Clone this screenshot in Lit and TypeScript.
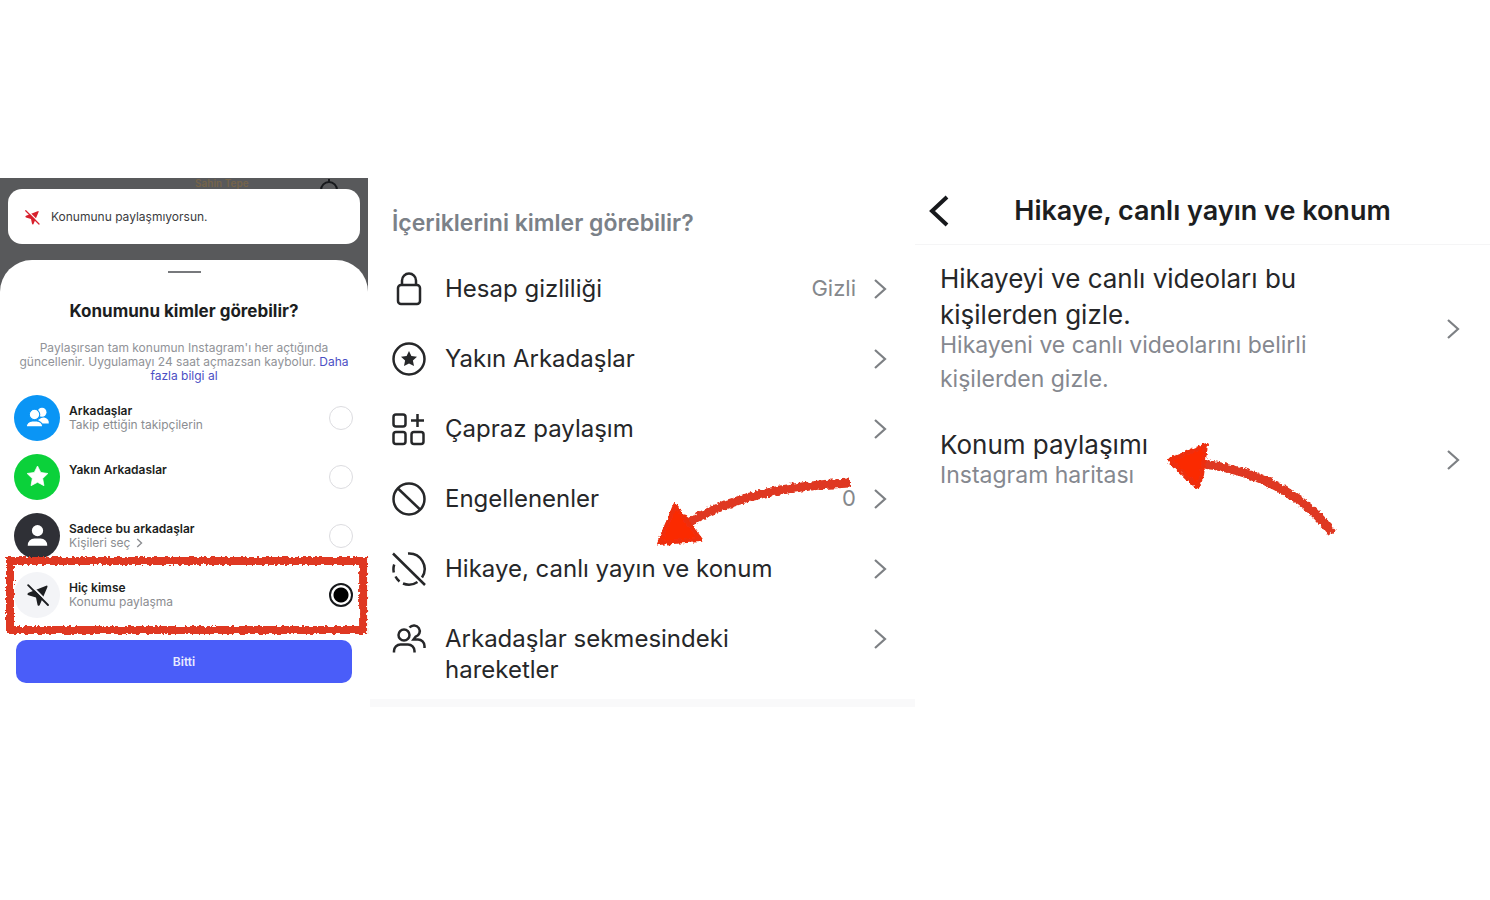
import { LitElement, html, css, svg } from "lit";
import { customElement, state } from "lit/decorators.js";

const chevron = html`<svg class="chev" viewBox="0 0 14 22" aria-hidden="true"><path d="M2 2 L12 11 L2 20" /></svg>`;

const icons: Record<string, unknown> = {
  lock: svg`<rect x="7" y="14" width="22" height="19" rx="3"/><path d="M11 14 V9.500 a7 7 0 0 1 14 0 V14"/>`,
  star: svg`<circle cx="18" cy="18" r="15.500"/><path class="solid" d="M18 10 l2.400 5 5.600 .7 -4.100 3.900 1.100 5.500 -5 -2.700 -5 2.700 1.100 -5.500 -4.100 -3.900 5.600 -.7z"/>`,
  grid: svg`<rect x="2.500" y="3.500" width="12" height="12" rx="2.500"/><rect x="2.500" y="21" width="12" height="12" rx="2.500"/><rect x="20.500" y="21" width="12" height="12" rx="2.500"/><path d="M26.500 3 V16 M20 9.500 H33"/>`,
  block: svg`<circle cx="18" cy="18" r="15.500"/><path d="M7 7.500 L29 28.500"/>`,
  hide: svg`<path d="M2 2.500 L34 34 M17 2.500 A15.500 15.500 0 0 1 31 26.500 M26.500 31 A15.500 15.500 0 0 1 12 32.500 M8.500 30.500 A15.500 15.500 0 0 1 4.500 25.500 M2.800 21.500 A15.500 15.500 0 0 1 3.200 13.500"/>`,
  people: svg`<circle cx="13" cy="14" r="5.500"/><path d="M3 31.500 V30 a6.500 6.500 0 0 1 6.500 -6.500 H17 a6.500 6.500 0 0 1 6.500 6.500 V31.500"/><path d="M18.500 6.500 A5.800 5.800 0 1 1 24.500 15.800 L22.500 18.500 H27 a6.500 6.500 0 0 1 6.500 6.500 V27"/>`,
};

const plane = svg`<path d="M30.500 6 Q32 6 31 8.500 L21 32 Q19 34.500 18 31.500 L16 22 L6 19 Q3 17.500 6 15.500 Z" fill="currentColor"/><path d="M8.500 5 L34 30.500" stroke="var(--cut)" stroke-width="2.500"/><path d="M5.500 5.500 L32 32" stroke="currentColor" stroke-width="2.500" stroke-linecap="round"/>`;

const audienceIcons: Record<string, unknown> = {
  friends: svg`<circle cx="24" cy="11" r="6" fill="#fff"/><path d="M18 26 a8 8 0 0 1 8 -8 h1 a7 7 0 0 1 6 8z" fill="#fff"/><circle cx="14" cy="14" r="7" fill="#fff" stroke="#0a95f5" stroke-width="1.500"/><path d="M3 30.500 a8 8 0 0 1 8 -8 h6 a8 8 0 0 1 8 8z" fill="#fff" stroke="#0a95f5" stroke-width="1.500"/>`,
  close: svg`<path d="M18 4 l4.300 8.600 9.500 1.400 -6.900 6.700 1.700 9.500 -8.600 -4.500 -8.600 4.500 1.700 -9.500 -6.900 -6.700 9.500 -1.400z" fill="#fff" stroke="#fff" stroke-width="1" stroke-linejoin="round"/>`,
  only: svg`<circle cx="18" cy="11.500" r="7.500" fill="#fff"/><path d="M5 31.500 a9 9 0 0 1 9 -9.500 h8 a9 9 0 0 1 9 9.500z" fill="#fff"/>`,
  nobody: plane,
};

const rough = (id: string) => svg`<filter id=${id} x="-5%" y="-15%" width="110%" height="130%"><feTurbulence type="fractalNoise" baseFrequency="0.300" numOctaves="2" seed="4"/><feDisplacementMap in="SourceGraphic" scale="5" xChannelSelector="R" yChannelSelector="G"/></filter>`;

@customElement("location-sheet")
class LocationSheet extends LitElement {
  @state() selected = "nobody";

  options = [
    { id: "friends", title: "Arkadaşlar", note: "Takip ettiğin takipçilerin" },
    { id: "close", title: "Yakın Arkadaslar", note: "" },
    { id: "only", title: "Sadece bu arkadaşlar", note: "Kişileri seç", more: true },
    { id: "nobody", title: "Hiç kimse", note: "Konumu paylaşma" },
  ];

  static styles = css`
    :host { display: block; background: #58595b; color: #1c1e21; }
    * { box-sizing: border-box; }
    .map { position: relative; padding: 11px 8px 0; }
    .place { position: absolute; left: 53%; top: -2px; font-size: 10px; line-height: 14px; font-weight: 600; color: #75644a; }
    .pin { position: absolute; right: 30px; top: 0; width: 18px; height: 14px; }
    .toast { position: relative; display: flex; align-items: center; gap: 10px; height: 55px; padding: 0 15px; border-radius: 14px; background: #fff; font-size: 12px; --cut: #fff; color: #3b3c3e; }
    .toast svg { width: 18px; height: 18px; color: #d8202c; }
    .sheet { margin-top: 16px; padding: 11px 16px 24px; border-radius: 32px 32px 0 0; background: #fff; }
    .handle { width: 33px; height: 2px; margin: 0 auto; background: #77797c; }
    h2 { margin: 27px 0 0; font-size: 17px; line-height: 22px; font-weight: 700; text-align: center; }
    .lead { margin: 19px 0 0; font-size: 12px; line-height: 14px; text-align: center; color: #919398; }
    a { color: #4b4fc4; text-decoration: none; }
    fieldset { margin: 5px 0 0; padding: 0; border: 0; }
    .option { position: relative; display: flex; align-items: center; height: 59px; gap: 9px; margin: 0 -1px 0 -2px; }
    .badge { flex: none; display: grid; place-items: center; width: 46px; height: 46px; border-radius: 50%; --cut: #f3f4f7; }
    .badge svg { width: 27px; height: 27px; }
    .friends { background: #0a95f5; }
    .close { background: #0bd13a; }
    .only { background: #2f3036; }
    .nobody { background: #f3f4f7; }
    .text { flex: 1; min-height: 28px; font-size: 12px; line-height: 14px; }
    .title { font-weight: 600; display: block; }
    .note { color: #8b8d91; }
    .note svg { width: 7px; height: 10px; margin-left: 6px; vertical-align: -1px; fill: none; stroke: #8b8d91; stroke-width: 3; }
    input { appearance: none; flex: none; width: 24px; height: 24px; margin: 0; border: 1px solid #dcdce0; border-radius: 50%; background: #fff; }
    input:checked { border: 2px solid #17191c; background: radial-gradient(circle, #000 7px, #fff 8px); }
    .mark { position: absolute; left: -9px; top: -9px; width: calc(100% + 25px); height: 79px; overflow: visible; pointer-events: none; }
    .mark rect { fill: none; stroke: #df3820; stroke-width: 8; }
    .done { display: block; width: 100%; height: 43px; margin-top: 16px; border: 0; border-radius: 10px; background: #4a5df9; color: #e8eaff; font: inherit; font-size: 12px; font-weight: 600; }
  `;

  render() {
    return html`
      <div class="map">
        <span class="place">Sahin Tepe</span>
        <svg class="pin" viewBox="0 0 18 14"><path d="M1 12 a8 8 0 0 1 16 0 M9 1 V5" fill="none" stroke="#17191c" stroke-width="2"/></svg>
        <div class="toast" role="status"><svg viewBox="0 0 36 36">${plane}</svg>Konumunu paylaşmıyorsun.</div>
      </div>
      <div class="sheet">
        <div class="handle"></div>
        <h2>Konumunu kimler görebilir?</h2>
        <p class="lead">Paylaşırsan tam konumun Instagram'ı her açtığında güncellenir. Uygulamayı 24 saat açmazsan kaybolur. <a href="#bilgi">Daha fazla bilgi al</a></p>
        <fieldset aria-label="Konumunu kimler görebilir?">
          ${this.options.map((o) => html`
            <label class="option">
              <span class="badge ${o.id}"><svg viewBox="0 0 36 36">${audienceIcons[o.id]}</svg></span>
              <span class="text"><span class="title">${o.title}</span><span class="note">${o.note}${o.more ? html`<svg viewBox="0 0 14 22"><path d="M2 2 L11.500 11 L2 20"/></svg>` : ""}</span></span>
              <input type="radio" name="audience" .checked=${this.selected === o.id} @change=${() => (this.selected = o.id)} />
              ${o.id === "nobody" ? html`<svg class="mark" aria-hidden="true">${rough("crayon-box")}<g filter="url(#crayon-box)"><rect x="5" y="5" width="97%" height="69"/></g></svg>` : ""}
            </label>`)}
        </fieldset>
        <button class="done">Bitti</button>
      </div>`;
  }
}

@customElement("privacy-list")
class PrivacyList extends LitElement {
  rows = [
    { icon: "lock", text: "Hesap gizliliği", value: "Gizli" },
    { icon: "star", text: "Yakın Arkadaşlar" },
    { icon: "grid", text: "Çapraz paylaşım" },
    { icon: "block", text: "Engellenenler", value: "0" },
    { icon: "hide", text: "Hikaye, canlı yayın ve konum" },
    { icon: "people", text: "Arkadaşlar sekmesindeki hareketler" },
  ];

  static styles = css`
    :host { display: block; position: relative; padding-left: 2px; color: #262729; }
    * { box-sizing: border-box; }
    h2 { margin: 0; padding: 30px 22px 16px; font-size: 23px; line-height: 30px; font-weight: 600; color: #7b8188; }
    ul { margin: 0; padding: 0 0 14px; list-style: none; border-bottom: 8px solid #f9f9fa; }
    .row { display: flex; align-items: flex-start; width: 100%; min-height: 70px; padding: 19px 28px 0 21px; border: 0; background: none; color: inherit; font: inherit; font-size: 24px; line-height: 31px; text-align: left; }
    .icon { flex: none; width: 36px; height: 36px; margin: -2px 18px 0 0; fill: none; stroke: currentColor; stroke-width: 2.5; }
    .solid { fill: currentColor; stroke: none; }
    .text { flex: 0 1 380px; margin-right: auto; }
    .value { color: #85888c; font-size: 22px; margin-right: 17px; }
    .chev { flex: none; width: 14px; height: 22px; margin-top: 5px; fill: none; stroke: #7d8084; stroke-width: 2.2; }
    .arrow { position: absolute; left: 52%; top: 296px; width: 210px; height: 80px; overflow: visible; pointer-events: none; }
  `;

  render() {
    return html`
      <h2>İçeriklerini kimler görebilir?</h2>
      <ul>
        ${this.rows.map((r) => html`<li><button class="row">
          <svg class="icon" viewBox="0 0 36 36" aria-hidden="true">${icons[r.icon]}</svg>
          <span class="text">${r.text}</span>
          ${r.value ? html`<span class="value">${r.value}</span>` : ""}
          ${chevron}
        </button></li>`)}
      </ul>
      <svg class="arrow" viewBox="0 0 210 80" aria-hidden="true">${rough("crayon-left")}
        <g filter="url(#crayon-left)"><path d="M36 49 C80 23 130 12 198 9" fill="none" stroke="#df3820" stroke-width="9"/><path d="M23 31 L49 66 L7 69 Z" fill="#fb2c06" stroke="#ee2f10" stroke-width="4" stroke-linejoin="round"/></g>
      </svg>`;
  }
}

@customElement("story-settings")
class StorySettings extends LitElement {
  static styles = css`
    :host { display: block; position: relative; color: #262729; }
    * { box-sizing: border-box; }
    header { display: grid; grid-template-columns: 48px 1fr 48px; align-items: center; height: 67px; border-bottom: 1px solid #f5f5f6; }
    .back { display: grid; place-items: center; height: 40px; padding: 0; border: 0; background: none; }
    .back svg { width: 22px; height: 34px; fill: none; stroke: #17191c; stroke-width: 4; }
    h2 { margin: 0; font-size: 27px; line-height: 30px; font-weight: 600; text-align: center; color: #1c1e21; }
    .list { display: grid; gap: 31px; padding: 16px 30px 0 25px; }
    .row { display: flex; align-items: center; justify-content: space-between; padding: 0; border: 0; background: none; color: inherit; font: inherit; text-align: left; }
    .text { max-width: 400px; }
    .title { display: block; font-size: 26px; line-height: 36px; }
    .note { display: block; margin-top: -5px; font-size: 23px; line-height: 34px; color: #85888f; }
    .chev { flex: none; width: 14px; height: 22px; fill: none; stroke: #7d8084; stroke-width: 2.2; }
    .arrow { position: absolute; left: 250px; top: 262px; width: 180px; height: 100px; overflow: visible; pointer-events: none; }
  `;

  render() {
    return html`
      <header>
        <button class="back" aria-label="Geri"><svg viewBox="0 0 22 34"><path d="M19 3 L4 17 L19 31"/></svg></button>
        <h2>Hikaye, canlı yayın ve konum</h2>
      </header>
      <div class="list">
        <button class="row"><span class="text"><span class="title">Hikayeyi ve canlı videoları bu kişilerden gizle.</span><span class="note">Hikayeni ve canlı videolarını belirli kişilerden gizle.</span></span>${chevron}</button>
        <button class="row"><span class="text"><span class="title">Konum paylaşımı</span><span class="note">Instagram haritası</span></span>${chevron}</button>
      </div>
      <svg class="arrow" viewBox="0 0 180 100" aria-hidden="true">${rough("crayon-right")}
        <g filter="url(#crayon-right)"><path d="M38 24 C90 30 140 55 167 93" fill="none" stroke="#df3820" stroke-width="9"/><path d="M4 20 L41 5 L37 35 L32 47 Z" fill="#fb2c06" stroke="#ee2f10" stroke-width="4" stroke-linejoin="round"/></g>
      </svg>`;
  }
}

@customElement("app-root")
class AppRoot extends LitElement {
  static styles = css`
    :host { display: block; min-height: 100vh; box-sizing: border-box; padding-top: 178px; background: #fff; font-family: Inter, "Liberation Sans", sans-serif; }
    .panels { display: grid; grid-template-columns: 368fr 547fr 575fr; align-items: start; }
  `;

  render() {
    return html`<main class="panels"><location-sheet></location-sheet><privacy-list></privacy-list><story-settings></story-settings></main>`;
  }
}
